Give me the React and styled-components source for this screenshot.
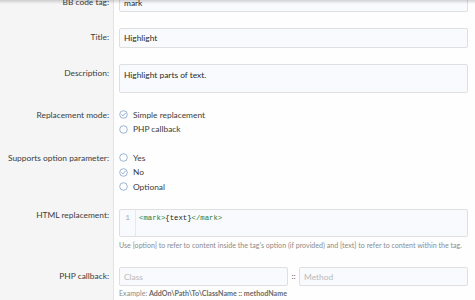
import React from "react";
import styled, { createGlobalStyle } from "styled-components";

const GlobalStyle = createGlobalStyle`
  html, body {
    margin: 0;
    padding: 0;
    background: #fefefe;
  }
  body {
    font-family: Lato, "Noto Sans", sans-serif;
    font-size: 8.4px;
    color: #141414;
    overflow: hidden;
  }
`;

const TopShadow = styled.div`
  position: fixed;
  top: 0;
  left: 0;
  right: 0;
  height: 4px;
  background: linear-gradient(to bottom, rgba(0, 0, 0, 0.16), rgba(0, 0, 0, 0));
  pointer-events: none;
`;

const Form = styled.div`
  margin-top: -15.5px;
  width: 468px;
  background: linear-gradient(to right, #f5f5f5 0, #f5f5f5 113px, #e3e3e3 113px, #e3e3e3 114px, #fefefe 114px);
`;

const Row = styled.div`
  display: grid;
  grid-template-columns: 114px 1fr;
`;

const Label = styled.div`
  padding: ${(p) => p.$pad}px 5px 0 0;
  text-align: right;
  white-space: nowrap;
  line-height: ${(p) => p.$lh || 19.5}px;
  color: #3c3c3c;
`;

const Field = styled.div`
  padding: ${(p) => p.$pad}px 0 ${(p) => p.$pad}px 5px;
  min-width: 0;
`;

const Input = styled.div`
  box-sizing: border-box;
  height: ${(p) => p.$h || 19.5}px;
  padding: ${(p) => (p.$multi ? "4px 4px" : "0 4px")};
  line-height: ${(p) => (p.$multi ? "12px" : "18px")};
  border: 1px solid #dfdfdf;
  border-radius: 2px;
  background: #f8fafd;
  color: ${(p) => (p.$placeholder ? "#b9b9b9" : "#2a2a2a")};
  flex: 1;
  white-space: nowrap;
  overflow: hidden;
`;

const Choices = styled.ul`
  list-style: none;
  margin: 0;
  padding: 0;
`;

const Choice = styled.li`
  display: flex;
  align-items: center;
  gap: 5px;
  height: 14.5px;
  color: #3c3c3c;
`;

const Editor = styled.div`
  box-sizing: border-box;
  height: 27.5px;
  border: 1px solid #dfdfdf;
  border-radius: 2px;
  background: #f8fafd;
  display: flex;
`;

const Gutter = styled.div`
  width: 16px;
  box-sizing: border-box;
  border-right: 1px solid #e6e9ee;
  padding: 3px 5px 0 0;
  text-align: right;
  font-family: "Liberation Mono", monospace;
  font-size: 7.3px;
  line-height: 10px;
  color: #a0a0a0;
`;

const Code = styled.div`
  padding: 3px 0 0 3px;
  font-family: "Liberation Mono", monospace;
  font-size: 7.3px;
  line-height: 10px;
  color: #222;
`;

const Tag = styled.span`
  color: #2f7d32;
`;

const Hint = styled.div`
  margin-top: ${(p) => p.$mt}px;
  font-size: 7.1px;
  line-height: 10px;
  color: #8c8c8c;
  white-space: nowrap;
`;

const Strong = styled.b`
  color: #6b6b6b;
  font-weight: 700;
`;

const Split = styled.div`
  display: flex;
  align-items: center;
`;

const Sep = styled.span`
  width: 11px;
  text-align: center;
  color: #555;
`;

function Radio({ checked }) {
  return (
    <svg width="9" height="9" viewBox="0 0 18 18">
      <circle cx="9" cy="9" r="7.6" fill="none" stroke="#7e9bc6" strokeWidth="1.5" />
      {checked && (
        <path d="M5.3 9.3 L7.9 11.9 L12.8 6.4" fill="none" stroke="#7e9bc6" strokeWidth="1.6" strokeLinecap="round" strokeLinejoin="round" />
      )}
    </svg>
  );
}

function InputRow({ label, children }) {
  return (
    <Row>
      <Label $pad={8}>{label}</Label>
      <Field $pad={8}>{children}</Field>
    </Row>
  );
}

function ChoiceRow({ label, options }) {
  return (
    <Row>
      <Label $pad={7} $lh={14.5}>{label}</Label>
      <Field $pad={7}>
        <Choices>
          {options.map((o) => (
            <Choice key={o.text}>
              <Radio checked={o.checked} />
              {o.text}
            </Choice>
          ))}
        </Choices>
      </Field>
    </Row>
  );
}

export default function App() {
  return (
    <>
      <GlobalStyle />
      <Form>
        <InputRow label="BB code tag:">
          <Input>mark</Input>
        </InputRow>
        <InputRow label="Title:">
          <Input>Highlight</Input>
        </InputRow>
        <InputRow label="Description:">
          <Input $multi $h={29}>Highlight parts of text.</Input>
        </InputRow>
        <ChoiceRow
          label="Replacement mode:"
          options={[
            { text: "Simple replacement", checked: true },
            { text: "PHP callback" },
          ]}
        />
        <ChoiceRow
          label="Supports option parameter:"
          options={[
            { text: "Yes" },
            { text: "No", checked: true },
            { text: "Optional" },
          ]}
        />
        <Row>
          <Label $pad={8} $lh={12}>HTML replacement:</Label>
          <Field $pad={8}>
            <Editor>
              <Gutter>1</Gutter>
              <Code>
                <Tag>&lt;mark&gt;</Tag>{"{text}"}<Tag>&lt;/mark&gt;</Tag>
              </Code>
            </Editor>
            <Hint $mt={4}>
              Use {"{option}"} to refer to content inside the tag's option (if provided) and {"{text}"} to refer to content within the tag.
            </Hint>
          </Field>
        </Row>
        <InputRow label="PHP callback:">
          <Split>
            <Input $placeholder>Class</Input>
            <Sep>::</Sep>
            <Input $placeholder>Method</Input>
          </Split>
          <Hint $mt={3}>
            Example: <Strong>AddOn\Path\To\ClassName :: methodName</Strong>
          </Hint>
        </InputRow>
      </Form>
      <TopShadow />
    </>
  );
}
